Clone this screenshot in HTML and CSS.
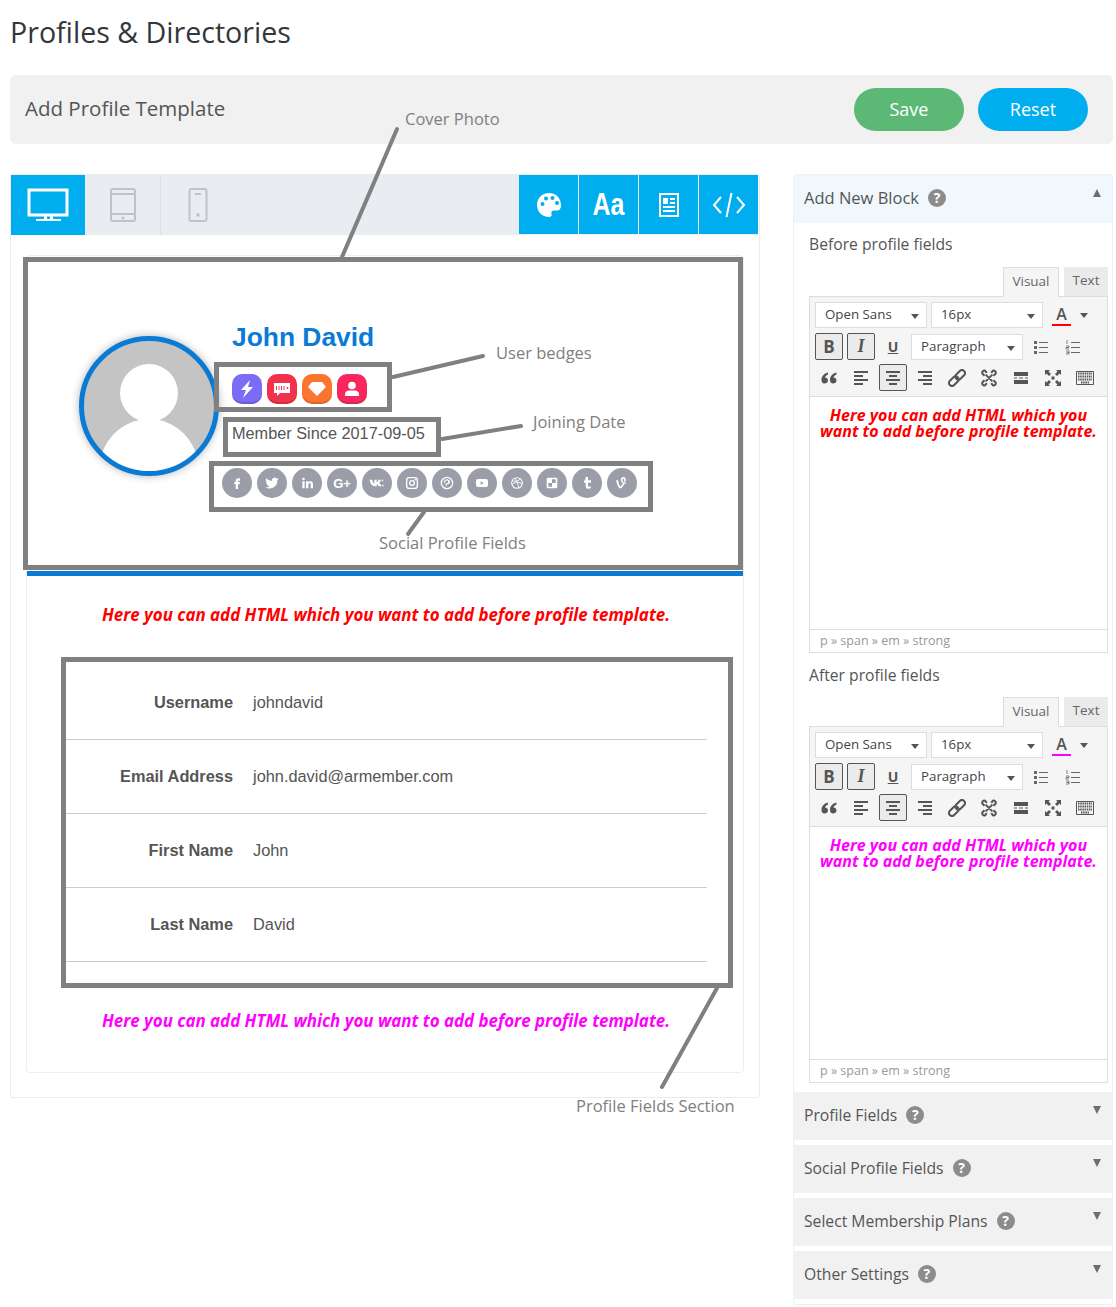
FILE: index.html
```html
<!DOCTYPE html>
<html lang="en">
<head>
    <meta charset="UTF-8">
    <meta name="viewport" content="width=device-width, initial-scale=1.0">
    <title>Profiles &amp; Directories</title>
    <link rel="stylesheet" href="styles.css">
</head>
<body>
    <!-- Shared editor icons -->
    <svg class="sprite" width="0" height="0">
        <symbol id="i-ul" viewBox="0 0 16 16"><path d="M1 2h3v3H1zM1 7h3v3H1zM1 12h3v3H1z" fill="#666"/><path d="M6 3.500h9M6 8.500h9M6 13.500h9" stroke="#666" fill="none"/></symbol>
        <symbol id="i-ol" viewBox="0 0 16 16"><path d="M6 3.500h9M6 8.500h9M6 13.500h9" stroke="#666" fill="none"/><path d="M2 1v4M1 7h3v1.500H1V10h3M1 12h3v3H1M1.500 13.500H4" stroke="#666" stroke-width=".8" fill="none"/></symbol>
        <symbol id="i-quote" viewBox="0 0 16 16"><path d="M7 2.500C3 3.500.5 6 .5 10c0 2.200 1.200 3.500 3 3.500S7 12.300 7 10.500 5.500 7.500 4 7.500c.3-1.500 1.700-2.500 3-3zM15.500 2.500c-4 1-6.500 3.500-6.500 7.500 0 2.200 1.200 3.500 3 3.500s3.500-1.200 3.500-3-1.500-3-3-3c.3-1.500 1.700-2.500 3-3z" fill="#555"/></symbol>
        <symbol id="i-left" viewBox="0 0 16 16"><path d="M1 2h14M1 6h9M1 10h14M1 14h9" stroke="#555" stroke-width="2" fill="none"/></symbol>
        <symbol id="i-center" viewBox="0 0 16 16"><path d="M1 2h14M4 6h8M1 10h14M4 14h8" stroke="#555" stroke-width="2" fill="none"/></symbol>
        <symbol id="i-right" viewBox="0 0 16 16"><path d="M1 2h14M6 6h9M1 10h14M6 14h9" stroke="#555" stroke-width="2" fill="none"/></symbol>
        <symbol id="i-link" viewBox="0 0 18 18"><g fill="none" stroke="#555" stroke-width="2" transform="rotate(-45 9 9)"><rect x="-1" y="6" width="11" height="6" rx="3"/><rect x="8" y="6" width="11" height="6" rx="3"/></g></symbol>
        <symbol id="i-unlink" viewBox="0 0 16 16"><path d="M4 6L2 4a2 2 0 0 1 2.500-2.500L6 3.500M12 10l2 2a2 2 0 0 1-2.500 2.500L10 12.500M10 3.500l1.500-2A2 2 0 0 1 14 4l-2 2M6 12.500l-1.500 2A2 2 0 0 1 2 12l2-2M5 5l6 6M11 5l-6 6" stroke="#555" stroke-width="1.800" fill="none"/></symbol>
        <symbol id="i-more" viewBox="0 0 16 16"><path d="M1 2h14v4H1zM1 10h14v4H1z" fill="#555"/><path d="M1 8h3M6 8h4M12 8h3" stroke="#555" fill="none"/></symbol>
        <symbol id="i-full" viewBox="0 0 16 16"><path d="M0 0h5L3.500 1.500 6 4 4 6 1.500 3.500 0 5zM16 0v5l-1.500-1.500L12 6l-2-2 2.500-2.500L11 0zM0 16v-5l1.500 1.500L4 10l2 2-2.500 2.500L5 16zM16 16h-5l1.500-1.500L10 12l2-2 2.500 2.500L16 11z" fill="#555"/><path d="M6.500 8h3" stroke="#555" stroke-width="3"/></symbol>
        <symbol id="i-kbd" viewBox="0 0 18 16"><path d="M.5 1.500h17v13H.5z" fill="none" stroke="#555"/><path d="M2 3.500h14M2 6.500h14M2 9.500h14M5 12.500h8" stroke="#555" stroke-width="2" stroke-dasharray="1.500 .7" fill="none"/></symbol>
    </svg>

    <h1 class="page-title">Profiles &amp; Directories</h1>

    <div class="title-bar">
        <h2>Add Profile Template</h2>
        <div class="title-actions">
            <button class="btn btn-save">Save</button>
            <button class="btn btn-reset">Reset</button>
        </div>
    </div>

    <div class="layout">
        <!-- Preview column -->
        <div class="preview">
            <div class="preview-toolbar">
                <div class="device device-active">
                    <svg width="42" height="34" viewBox="0 0 42 34"><path d="M2 2h38v25H2z" fill="none" stroke="#fff" stroke-width="3"/><path d="M17 27h3v4h-3zM23 27h3v4h-3zM9 31h25v2H9z" fill="#fff"/></svg>
                </div>
                <div class="device">
                    <svg width="26" height="34" viewBox="0 0 26 34"><rect x="1" y="1" width="24" height="32" rx="2" fill="none" stroke="#bfc3c9" stroke-width="2"/><path d="M1 6h24M1 26h24" stroke="#bfc3c9" stroke-width="2"/><circle cx="13" cy="30" r="1.500" fill="#bfc3c9"/></svg>
                </div>
                <div class="device">
                    <svg width="20" height="34" viewBox="0 0 20 34"><rect x="1.500" y="1" width="17" height="32" rx="2" fill="none" stroke="#bfc3c9" stroke-width="2"/><path d="M7 6h6" stroke="#bfc3c9" stroke-width="2"/><circle cx="10" cy="27" r="1.800" fill="#bfc3c9"/></svg>
                </div>
                <div class="tool-group">
                    <div class="tool">
                        <svg width="26" height="26" viewBox="0 0 26 26"><path d="M13 1C6 1 1 6 1 13c0 6.500 5 12 12 12 2.500 0 3-1.500 2.500-3-.7-2 .5-3.500 2.500-3.500h3c2.500 0 4-2 4-5C25 6 20 1 13 1z" fill="#fff"/><circle cx="6.500" cy="12" r="2" fill="#00aeef"/><circle cx="10" cy="6.500" r="2" fill="#00aeef"/><circle cx="16.500" cy="6" r="2" fill="#00aeef"/><circle cx="21" cy="11" r="2" fill="#00aeef"/></svg>
                    </div>
                    <div class="tool"><span class="tool-text">Aa</span></div>
                    <div class="tool">
                        <svg width="20" height="24" viewBox="0 0 20 24"><path d="M1 1h18v22H1z" fill="none" stroke="#fff" stroke-width="2"/><path d="M4 5h5v6H4z" fill="#fff"/><path d="M11 6h5M11 10h5M4 14h12M4 18h12" stroke="#fff" stroke-width="2"/></svg>
                    </div>
                    <div class="tool">
                        <svg width="34" height="26" viewBox="0 0 34 26"><path d="M9 5l-7 8 7 8M25 5l7 8-7 8M19.500 1l-5 24" fill="none" stroke="#fff" stroke-width="2"/></svg>
                    </div>
                </div>
            </div>

            <div class="profile-card">
                <div class="cover">
                    <div class="avatar">
                        <svg width="130" height="130" viewBox="0 0 130 130"><circle cx="65" cy="52" r="29" fill="#fff"/><ellipse cx="65" cy="130" rx="50" ry="52" fill="#fff"/></svg>
                    </div>
                    <div class="identity">
                        <div class="profile-name">John David</div>
                        <div class="badges">
                            <span class="badge badge-purple"><svg width="16" height="18" viewBox="0 0 16 18"><path d="M11 0L2 10h5l-3 8 10-11H9z" fill="#fff"/></svg></span>
                            <span class="badge badge-red"><svg width="18" height="16" viewBox="0 0 18 16"><path d="M1 2h16v10H7l-3 3v-3H1z" fill="#fff"/><path d="M3.500 5v4M6 5v4M8.500 5v4M11 5v4M13.500 7h2M14.500 6v2" stroke="#f0334b"/></svg></span>
                            <span class="badge badge-orange"><svg width="18" height="16" viewBox="0 0 18 16"><path d="M4 1h10l4 5-9 9-9-9z" fill="#fff"/></svg></span>
                            <span class="badge badge-pink"><svg width="16" height="16" viewBox="0 0 16 16"><circle cx="8" cy="4.500" r="3.800" fill="#fff"/><path d="M1 15v-2c0-2 2-3.500 4-3.500h6c2 0 4 1.500 4 3.500v2z" fill="#fff"/></svg></span>
                        </div>
                        <div class="member-since">Member Since 2017-09-05</div>
                        <div class="socials">
                            <span class="social"><svg viewBox="0 0 24 24"><path d="M14 8.500h2.500V5H14c-2.500 0-4 1.600-4 4v1.500H8V14h2v7h3.500v-7H16l.5-3.500h-3V9c0-.3.2-.5.5-.5z"/></svg></span>
                            <span class="social"><svg viewBox="0 0 24 24"><path d="M22 5.900c-.7.3-1.500.5-2.400.6.900-.5 1.500-1.300 1.800-2.300-.8.5-1.700.8-2.600 1a4.100 4.100 0 0 0-7 3.700A11.600 11.600 0 0 1 3.400 4.700a4.100 4.100 0 0 0 1.300 5.500c-.7 0-1.300-.2-1.900-.5 0 2 1.400 3.700 3.300 4.100-.6.200-1.200.2-1.800.1.500 1.600 2 2.800 3.800 2.800A8.200 8.200 0 0 1 2 18.400a11.600 11.600 0 0 0 17.900-10.300c.8-.6 1.500-1.300 2.100-2.200z"/></svg></span>
                            <span class="social"><svg viewBox="0 0 24 24"><path d="M5 9.500h3.500V20H5zM6.700 4a2 2 0 1 1 0 4 2 2 0 0 1 0-4zM10.500 9.500H14V11c.6-1 1.800-1.800 3.300-1.800 3 0 3.700 2 3.700 4.700V20h-3.500v-5.500c0-1.400-.3-2.400-1.600-2.400S14 13.200 14 14.600V20h-3.500z"/></svg></span>
                            <span class="social social-text">G+</span>
                            <span class="social"><svg viewBox="0 0 24 24"><path d="M1 7h4c.5 3 1.500 5 3 6V7h3.500v4c1.300-.5 2.500-2 3-4H18c-.5 2.500-2 4.300-3 5 1.300.7 3 2.300 4 5h-4c-.6-1.700-2-3-3.500-3.300V17H10C5 17 1.500 13 1 7z"/><path d="M19 7h3l-2 3zM20 14l3 3h-3z"/></svg></span>
                            <span class="social"><svg viewBox="0 0 24 24"><rect x="4" y="4" width="16" height="16" rx="4" fill="none" stroke="#fff" stroke-width="2"/><circle cx="12" cy="12" r="3.500" fill="none" stroke="#fff" stroke-width="2"/><circle cx="16.800" cy="7.200" r="1.200"/></svg></span>
                            <span class="social"><svg viewBox="0 0 24 24"><circle cx="12" cy="12" r="8.500" fill="none" stroke="#fff" stroke-width="2"/><path d="M12 6.500c-3 0-4.500 2-4.500 4 0 1 .5 2 1.300 2.300l.7-1.300c-.5-.5-.5-2 .5-2.800 1.500-1 3.800-.5 3.800 1.500 0 2.500-3 3.500-3.300 1.500L10 17h1.200l1-3.500c2.300 1 4.300-.8 4.300-3.300 0-2-1.700-3.700-4.500-3.700z"/></svg></span>
                            <span class="social"><svg viewBox="0 0 24 24"><path fill-rule="evenodd" d="M6 6h12a3 3 0 0 1 3 3v6a3 3 0 0 1-3 3H6a3 3 0 0 1-3-3V9a3 3 0 0 1 3-3zm4 3.500v5l4.500-2.500z"/></svg></span>
                            <span class="social"><svg viewBox="0 0 24 24"><circle cx="12" cy="12" r="8" fill="none" stroke="#fff" stroke-width="1.600"/><path d="M5 9c5 1 10 0 12-3.500M4.500 15C8 10 14 10 19.500 13M9 5c3 4 5 10 5.500 14.500" fill="none" stroke="#fff" stroke-width="1.300"/></svg></span>
                            <span class="social"><svg viewBox="0 0 24 24"><path fill-rule="evenodd" d="M6 4h12a2 2 0 0 1 2 2v12a2 2 0 0 1-2 2H6a2 2 0 0 1-2-2V6a2 2 0 0 1 2-2zm6 2.500V12H6.500v5.500H12V12h5.500V6.500z"/></svg></span>
                            <span class="social"><svg viewBox="0 0 24 24"><path d="M10 3h3.500v5H18v3.500h-4.500V16c0 1.600 1.800 1.700 4 .8V20c-3.500 1.500-7.500.8-7.500-3.500v-5H7.500V9C9 8.500 10 6 10 3z"/></svg></span>
                            <span class="social"><svg viewBox="0 0 24 24"><path d="M3 8h3.200c.6 4 1.700 7.500 3.400 9.500 1.500-1.500 3-3.700 3.700-5.500-2-1-3-3-3-5 0-2.500 1.500-4 3.700-4 2.400 0 3.700 1.600 3.700 4 0 1-.2 2-.6 3-1.200.4-2 0-2.300-.5.200-.7.300-1.400.3-2 0-1-.4-1.700-1-1.700-.8 0-1.200.8-1.200 2 0 2 1.200 3.500 3 3.500.6 0 1.400-.1 2.100-.4v2c-.9.200-1.700.3-2.400.3-1 2.500-3 5.300-5.300 6.800H8C5.800 17 4 13 3 8z"/></svg></span>
                        </div>
                    </div>
                </div>
                <div class="cover-rule"></div>

                <p class="custom-html custom-before">Here you can add HTML which you want to add before profile template.</p>

                <div class="fields">
                    <div class="field-row"><span class="field-label">Username</span><span class="field-value">johndavid</span></div>
                    <div class="field-row"><span class="field-label">Email Address</span><span class="field-value">john.david@armember.com</span></div>
                    <div class="field-row"><span class="field-label">First Name</span><span class="field-value">John</span></div>
                    <div class="field-row"><span class="field-label">Last Name</span><span class="field-value">David</span></div>
                </div>

                <p class="custom-html custom-after">Here you can add HTML which you want to add before profile template.</p>
            </div>
        </div>

        <!-- Settings column -->
        <div class="sidebar">
            <div class="block-head block-open">
                <span>Add New Block</span><span class="help">?</span><span class="arrow arrow-up"></span>
            </div>
            <div class="block-body">
                <div class="editor-label">Before profile fields</div>
                <div class="editor">
                    <div class="editor-tabs"><span class="tab tab-active">Visual</span><span class="tab">Text</span></div>
                    <div class="editor-tools">
                        <div class="tool-row">
                            <span class="select">Open Sans</span>
                            <span class="select">16px</span>
                            <span class="color-btn color-red">A</span>
                            <span class="caret"></span>
                        </div>
                        <div class="tool-row">
                            <span class="ed-btn ed-on ed-bold">B</span>
                            <span class="ed-btn ed-on ed-italic">I</span>
                            <span class="ed-btn ed-underline">U</span>
                            <span class="select">Paragraph</span>
                            <span class="ed-icon"><svg width="16" height="16"><use href="#i-ul"/></svg></span>
                            <span class="ed-icon"><svg width="16" height="16"><use href="#i-ol"/></svg></span>
                        </div>
                        <div class="tool-row">
                            <span class="ed-icon"><svg width="16" height="16"><use href="#i-quote"/></svg></span>
                            <span class="ed-icon"><svg width="16" height="16"><use href="#i-left"/></svg></span>
                            <span class="ed-icon ed-on"><svg width="16" height="16"><use href="#i-center"/></svg></span>
                            <span class="ed-icon"><svg width="16" height="16"><use href="#i-right"/></svg></span>
                            <span class="ed-icon"><svg width="18" height="18"><use href="#i-link"/></svg></span>
                            <span class="ed-icon"><svg width="18" height="18"><use href="#i-unlink"/></svg></span>
                            <span class="ed-icon"><svg width="16" height="16"><use href="#i-more"/></svg></span>
                            <span class="ed-icon"><svg width="16" height="16"><use href="#i-full"/></svg></span>
                            <span class="ed-icon"><svg width="18" height="16"><use href="#i-kbd"/></svg></span>
                        </div>
                    </div>
                    <div class="editor-body custom-before">Here you can add HTML which you want to add before profile template.</div>
                    <div class="editor-status">p » span » em » strong<span class="resize"></span></div>
                </div>

                <div class="editor-label">After profile fields</div>
                <div class="editor">
                    <div class="editor-tabs"><span class="tab tab-active">Visual</span><span class="tab">Text</span></div>
                    <div class="editor-tools">
                        <div class="tool-row">
                            <span class="select">Open Sans</span>
                            <span class="select">16px</span>
                            <span class="color-btn color-pink">A</span>
                            <span class="caret"></span>
                        </div>
                        <div class="tool-row">
                            <span class="ed-btn ed-on ed-bold">B</span>
                            <span class="ed-btn ed-on ed-italic">I</span>
                            <span class="ed-btn ed-underline">U</span>
                            <span class="select">Paragraph</span>
                            <span class="ed-icon"><svg width="16" height="16"><use href="#i-ul"/></svg></span>
                            <span class="ed-icon"><svg width="16" height="16"><use href="#i-ol"/></svg></span>
                        </div>
                        <div class="tool-row">
                            <span class="ed-icon"><svg width="16" height="16"><use href="#i-quote"/></svg></span>
                            <span class="ed-icon"><svg width="16" height="16"><use href="#i-left"/></svg></span>
                            <span class="ed-icon ed-on"><svg width="16" height="16"><use href="#i-center"/></svg></span>
                            <span class="ed-icon"><svg width="16" height="16"><use href="#i-right"/></svg></span>
                            <span class="ed-icon"><svg width="18" height="18"><use href="#i-link"/></svg></span>
                            <span class="ed-icon"><svg width="18" height="18"><use href="#i-unlink"/></svg></span>
                            <span class="ed-icon"><svg width="16" height="16"><use href="#i-more"/></svg></span>
                            <span class="ed-icon"><svg width="16" height="16"><use href="#i-full"/></svg></span>
                            <span class="ed-icon"><svg width="18" height="16"><use href="#i-kbd"/></svg></span>
                        </div>
                    </div>
                    <div class="editor-body custom-after">Here you can add HTML which you want to add before profile template.</div>
                    <div class="editor-status">p » span » em » strong<span class="resize"></span></div>
                </div>
            </div>
            <div class="block-head"><span>Profile Fields</span><span class="help">?</span><span class="arrow"></span></div>
            <div class="block-head"><span>Social Profile Fields</span><span class="help">?</span><span class="arrow"></span></div>
            <div class="block-head"><span>Select Membership Plans</span><span class="help">?</span><span class="arrow"></span></div>
            <div class="block-head"><span>Other Settings</span><span class="help">?</span><span class="arrow"></span></div>
        </div>
    </div>

    <!-- Callouts drawn over the screenshot -->
    <svg class="callouts" width="1116" height="1307" viewBox="0 0 1116 1307">
        <g fill="none" stroke="#808080" stroke-width="5">
            <rect x="25.500" y="259.500" width="715" height="308"/>
            <rect x="216.500" y="364.500" width="173" height="45"/>
            <rect x="225.500" y="419.500" width="213" height="35"/>
            <rect x="211.500" y="463.500" width="439" height="46"/>
            <rect x="63.500" y="659.500" width="667" height="326"/>
        </g>
        <g stroke="#808080" stroke-width="4" stroke-linecap="round">
            <path d="M397 129L342 257"/>
            <path d="M393 377L483 356"/>
            <path d="M442 439L521 426"/>
            <path d="M424 512L408 534"/>
            <path d="M717 988L662 1087"/>
        </g>
    </svg>
    <span class="callout-label label-cover">Cover Photo</span>
    <span class="callout-label label-badges">User bedges</span>
    <span class="callout-label label-date">Joining Date</span>
    <span class="callout-label label-social">Social Profile Fields</span>
    <span class="callout-label label-fields">Profile Fields Section</span>
</body>
</html>
```
FILE: styles.css
```css
body {
    font-family: 'Open Sans', sans-serif;
    margin: 0;
    padding: 0;
    background-color: #fff;
    color: #555;
    position: relative;
    width: 1116px;
    height: 1307px;
    overflow: hidden;
}

.sprite {
    position: absolute;
}

.page-title {
    margin: 0;
    padding-left: 10px;
    height: 75px;
    box-sizing: border-box;
    padding-top: 12px;
    font-size: 28.600px;
    line-height: 40px;
    font-weight: 400;
    color: #32373c;
}

.title-bar {
    margin-left: 10px;
    width: 1103px;
    height: 69px;
    box-sizing: border-box;
    padding: 0 25px 0 15px;
    background-color: #f1f1f1;
    border-radius: 6px;
    display: flex;
    align-items: center;
    justify-content: space-between;
}

.title-bar h2 {
    margin: 0 0 4px;
    font-size: 20.500px;
    font-weight: 400;
    color: #555;
}

.title-actions {
    display: flex;
    gap: 14px;
}

.btn {
    width: 110px;
    height: 43px;
    border: none;
    border-radius: 22px;
    padding: 0 0 2px;
    color: #fff;
    font-family: 'Open Sans', sans-serif;
    font-size: 18px;
}

.btn-save {
    background-color: #5cb975;
}

.btn-reset {
    background-color: #00aeef;
}

.layout {
    display: flex;
    align-items: flex-start;
    gap: 33px;
    margin: 30px 0 0 10px;
}

/* Preview column */
.preview {
    width: 750px;
    height: 924px;
    box-sizing: border-box;
    border: 1px solid #e9ebef;
    border-radius: 3px;
}

.preview-toolbar {
    display: flex;
    height: 60px;
    background-color: #e9ecf1;
    margin-right: 1px;
}

.device {
    width: 74px;
    height: 60px;
    display: flex;
    align-items: center;
    justify-content: center;
    border-right: 1px solid #dde0e5;
    padding-left: 1px;
}

.device-active {
    padding-left: 0;
    background-color: #00aeef;
    border-right: none;
}

.device:nth-child(3) {
    padding-left: 0;
    border-right: none;
}

.tool-group {
    margin-left: auto;
    display: flex;
    gap: 1px;
}

.tool {
    width: 59px;
    height: 59px;
    background-color: #00aeef;
    display: flex;
    align-items: center;
    justify-content: center;
    color: #fff;
}

.tool-text {
    font-family: 'Liberation Sans', sans-serif;
    font-size: 32px;
    font-weight: 700;
    transform: scaleX(.78);
}

.profile-card {
    margin: 20px 15px 0 15px;
    height: 818px;
    box-sizing: border-box;
    border: 1px solid #eceef2;
    border-radius: 4px;
}

.cover {
    height: 315px;
    box-sizing: border-box;
    padding: 65px 0 0 52px;
    display: flex;
    gap: 3px;
}

.avatar {
    width: 130px;
    height: 130px;
    margin-top: 15px;
    border: 5px solid #0a7bd5;
    border-radius: 50%;
    background-color: #c4c4c4;
    box-shadow: 0 0 8px rgba(0, 0, 0, 0.3);
    overflow: hidden;
}

.identity {
    display: flex;
    flex-direction: column;
}

.profile-name {
    margin-left: 10px;
    font-family: 'Liberation Sans', sans-serif;
    font-size: 26.400px;
    font-weight: 700;
    line-height: 32px;
    color: #0a7bd5;
}

.badges {
    display: flex;
    gap: 5px;
    margin: 21px 0 0 10px;
}

.badge {
    width: 30px;
    height: 30px;
    border-radius: 10px;
    display: flex;
    align-items: center;
    justify-content: center;
    box-shadow: inset 0 -2px 0 rgba(0, 0, 0, 0.12);
}

.badge-purple {
    background-color: #7b6cf6;
}

.badge-red {
    background-color: #f0334b;
}

.badge-orange {
    background-color: #fb7430;
}

.badge-pink {
    background-color: #f8285f;
}

.member-since {
    margin: 19px 0 0 10px;
    font-family: 'Liberation Sans', sans-serif;
    font-size: 16.300px;
    line-height: 20px;
    color: #555;
}

.socials {
    display: flex;
    gap: 5px;
    margin-top: 25px;
}

.social {
    width: 30px;
    height: 30px;
    border-radius: 50%;
    background-color: #9b9da8;
    display: flex;
    align-items: center;
    justify-content: center;
}

.social svg {
    width: 16px;
    height: 16px;
    fill: #fff;
}

.social-text {
    color: #fff;
    font-family: 'Liberation Sans', sans-serif;
    font-size: 13px;
    font-weight: 700;
}

.cover-rule {
    height: 5px;
    background-color: #0a7bd5;
}

.custom-html {
    margin: 0;
    padding-left: 2px;
    text-align: center;
    font-size: 16.900px;
    line-height: 24px;
}

.custom-before,
.custom-after {
    font-weight: 700;
    font-style: italic;
}

.custom-before {
    color: #ff0000;
}

.custom-after {
    color: #ff00ff;
}

.profile-card > .custom-before {
    padding-top: 27px;
}

.profile-card > .custom-after {
    padding-top: 47px;
}

.fields {
    margin: 39px 36px 0 39px;
}

.field-row {
    height: 74px;
    box-sizing: border-box;
    border-bottom: 1px solid #ccc;
    display: flex;
    align-items: center;
    gap: 20px;
    font-family: 'Liberation Sans', sans-serif;
    font-size: 16.350px;
}

.field-label {
    width: 167px;
    text-align: right;
    font-weight: 700;
}

/* Settings column */
.sidebar {
    width: 320px;
    height: 1131px;
    box-sizing: border-box;
    border: 1px solid #eef0f3;
    border-radius: 3px;
}

.block-head {
    position: relative;
    height: 48px;
    margin-bottom: 5px;
    padding: 0 0 2px 10px;
    box-sizing: border-box;
    background-color: #f1f1f1;
    display: flex;
    align-items: center;
    gap: 9px;
    font-size: 15.700px;
    color: #555;
}

.block-open {
    background-color: #f0f8fe;
    font-size: 16.500px;
    margin-bottom: 0;
    padding-bottom: 3px;
}

.help {
    width: 18px;
    height: 18px;
    border-radius: 50%;
    background-color: #8c8c8c;
    color: #fff;
    font-size: 14px;
    font-weight: 700;
    line-height: 18px;
    text-align: center;
}

.arrow {
    position: absolute;
    right: 11px;
    top: 14px;
    border-left: 4px solid transparent;
    border-right: 4px solid transparent;
    border-top: 8px solid #6d6d72;
}

.arrow-up {
    border-top: none;
    border-bottom: 8px solid #6d6d72;
}

.block-body {
    padding: 10px 4px 9px 15px;
}

.editor-label {
    font-size: 15.700px;
    line-height: 22px;
    color: #555;
}

.block-body > .editor-label:first-child {
    margin-bottom: 12px;
}

.editor {
    margin-top: 11px;
    margin-bottom: 11px;
}

.editor:last-child {
    margin-bottom: 0;
}

.editor-tabs {
    display: flex;
    justify-content: flex-end;
    gap: 5px;
    height: 29px;
    position: relative;
    z-index: 1;
}

.tab {
    width: 44px;
    box-sizing: border-box;
    text-align: center;
    font-size: 13.500px;
    line-height: 27px;
    background-color: #ebebeb;
    color: #666;
    height: 29px;
}

.tab-active {
    width: 56px;
    background-color: #f5f5f5;
    border: 1px solid #ddd;
    border-bottom: none;
    height: 30px;
}

.editor-tools {
    height: 101px;
    box-sizing: border-box;
    background-color: #f5f5f5;
    border: 1px solid #ddd;
    padding: 5px 5px 0 5px;
}

.tool-row {
    display: flex;
    align-items: center;
    height: 26px;
    gap: 4px;
}

.tool-row + .tool-row {
    height: 27px;
    margin-top: 5px;
}

.tool-row + .tool-row + .tool-row {
    margin-top: 4px;
}

.select {
    position: relative;
    width: 112px;
    height: 26px;
    box-sizing: border-box;
    padding-left: 9px;
    background-color: #fff;
    border: 1px solid #ddd;
    font-size: 13.300px;
    line-height: 23px;
    color: #444;
}

.select::after {
    content: "";
    position: absolute;
    right: 7px;
    top: 11px;
    border-left: 4px solid transparent;
    border-right: 4px solid transparent;
    border-top: 5px solid #555;
}

.color-btn {
    margin-left: 5px;
    width: 19px;
    height: 21px;
    text-align: center;
    font-size: 16px;
    font-weight: 600;
    line-height: 18px;
    color: #555;
    box-sizing: border-box;
    border-bottom: 2px solid;
}

.color-red {
    border-bottom-color: #ff0000;
}

.color-pink {
    border-bottom-color: #ff00ff;
}

.caret {
    margin-left: 5px;
    border-left: 4px solid transparent;
    border-right: 4px solid transparent;
    border-top: 5px solid #555;
}

.ed-btn,
.ed-icon {
    width: 28px;
    height: 27px;
    box-sizing: border-box;
    border: 1px solid transparent;
    border-radius: 2px;
    display: flex;
    align-items: center;
    justify-content: center;
    flex: none;
}

.ed-on {
    border-color: #555;
    background-color: #ebebeb;
}

.ed-bold {
    font-weight: 700;
    font-size: 17px;
}

.ed-italic {
    font-family: 'Liberation Serif', serif;
    font-weight: 700;
    font-style: italic;
    font-size: 18px;
}

.ed-underline {
    font-weight: 700;
    font-size: 14px;
    text-decoration: underline;
}

.editor-body {
    height: 232px;
    box-sizing: border-box;
    padding: 10px 8px;
    border-left: 1px solid #ddd;
    border-right: 1px solid #ddd;
    text-align: center;
    font-size: 16px;
    line-height: 16px;
}

.editor-status {
    position: relative;
    height: 24px;
    box-sizing: border-box;
    padding-left: 10px;
    border: 1px solid #ddd;
    font-size: 12.500px;
    line-height: 22px;
    color: #999;
}

.resize {
    position: absolute;
    right: 2px;
    bottom: 2px;
    width: 9px;
    height: 9px;
    background: radial-gradient(#8aa86a 45%, transparent 50%) 0 0 / 2px 2px;
    clip-path: polygon(100% 0, 100% 100%, 0 100%);
}

/* Callouts */
.callouts {
    position: absolute;
    left: 0;
    top: 0;
    pointer-events: none;
}

.callout-label {
    position: absolute;
    font-size: 16.500px;
    line-height: 22px;
    color: #808080;
    white-space: nowrap;
}

.label-cover {
    left: 405px;
    top: 108px;
}

.label-badges {
    left: 496px;
    top: 342px;
}

.label-date {
    left: 533px;
    top: 411px;
}

.label-social {
    left: 379px;
    top: 532px;
}

.label-fields {
    left: 576px;
    top: 1095px;
}
```
